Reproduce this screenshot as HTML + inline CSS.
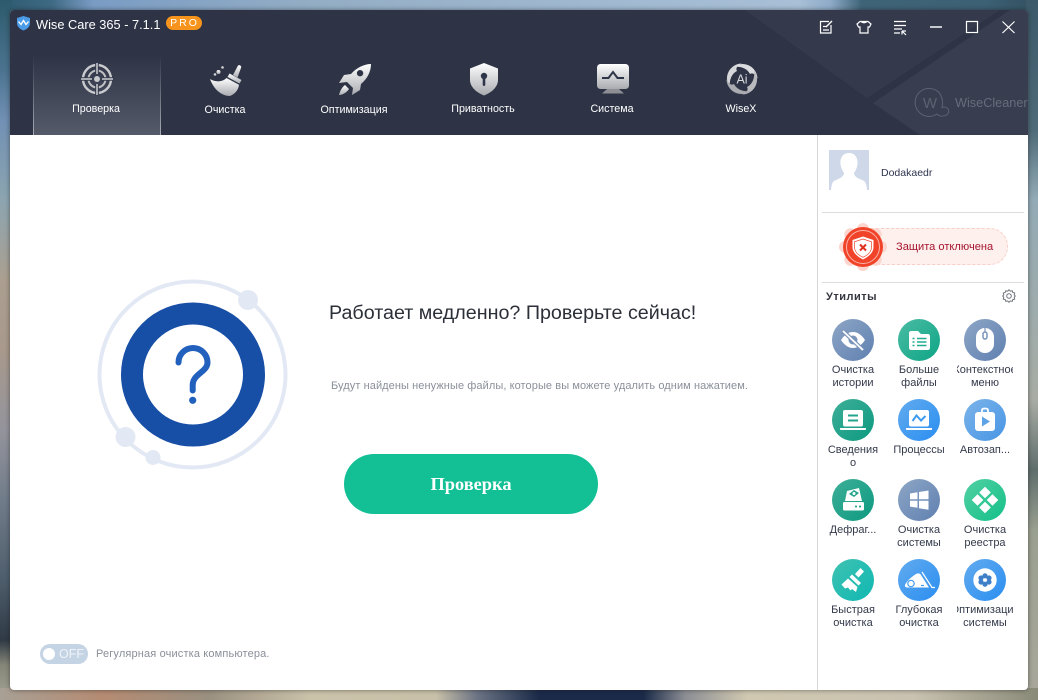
<!DOCTYPE html>
<html lang="ru"><head><meta charset="utf-8"><title>Wise Care 365</title>
<style>
html,body{margin:0;padding:0;width:1038px;height:700px;overflow:hidden;background:#8a99a5;font-family:"Liberation Sans","DejaVu Sans",sans-serif}
.a{position:absolute}
#top{left:0;top:0;width:1038px;height:14px;background:linear-gradient(90deg,#2e5a70 0,#3f6a84 5%,#7a9cc4 9%,#93adc4 30%,#9fb8d0 55%,#a8bfd6 77%,#8eabc8 80%,#3f6478 83%,#3c6074 95%,#33505f 100%)}
#left{left:0;top:0;width:12px;height:700px;background:linear-gradient(180deg,#2d5a6c 0,#4b7390 70px,#7190b4 120px,#8ca5b0 200px,#ab9f90 280px,#a8998c 350px,#94949c 430px,#707c8a 500px,#4e5d6c 580px,#2f3a45 640px,#868678 665px,#a3a396 700px)}
#right{left:1026px;top:0;width:12px;height:700px;background:linear-gradient(180deg,#3c5a6a 0,#4f6a78 130px,#93abb6 200px,#a8aca4 400px,#5f6e6c 470px,#9aa090 530px,#a9a79b 700px)}
#bot{left:0;top:688px;width:1038px;height:12px;background:linear-gradient(90deg,#a8a095 0,#b58b72 10%,#9a9080 20%,#cbc2aa 30%,#c8c0a8 42%,#6b7384 46%,#1a2a48 52%,#1a2a48 62%,#8c8e94 66%,#d0c8b0 72%,#c9c2b0 88%,#8a8a78 100%)}
#win{left:10px;top:10px;width:1018px;height:680px;background:#fff;border-radius:4px;overflow:hidden;box-shadow:0 0 5px rgba(30,30,30,.55)}
#hdr{left:10px;top:10px;width:1018px;height:125px;background:#2e3446;border-radius:4px 4px 0 0;overflow:hidden}
.nav{color:#fff;font-size:10.7px;line-height:14px;text-align:center;width:120px;white-space:nowrap}
.l{position:absolute;width:56px;height:13px;display:flex;justify-content:center;overflow:hidden;white-space:nowrap;color:#333a4a;font-size:11px;line-height:13px}
.ic{position:absolute;width:42px;height:42px;border-radius:50%}
.ic svg{display:block}
.slate{background:linear-gradient(135deg,#8ea6c6,#5f80b0)}
.green{background:linear-gradient(135deg,#4abca4,#0ea585)}
.teal{background:linear-gradient(135deg,#3eae98,#0d9a80)}
.blue{background:linear-gradient(135deg,#62abef,#2a8ef0)}
.lblue{background:linear-gradient(135deg,#7cb4ea,#4795e4)}
.bgreen{background:linear-gradient(135deg,#52d0a4,#14c088)}
.cyan{background:linear-gradient(135deg,#3fc2b2,#0fb8b2)}
</style></head><body>
<div class="a" id="top"></div><div class="a" id="left"></div><div class="a" id="right"></div><div class="a" id="bot"></div>
<div class="a" id="win"></div>

<svg class="a" width="0" height="0" style="left:0;top:0"><defs>
<linearGradient id="g" x1="0" y1="0" x2="0" y2="1"><stop offset="0" stop-color="#ffffff"/><stop offset="1" stop-color="#a9abb0"/></linearGradient>
</defs></svg>

<div class="a" id="hdr">
<svg class="a" style="left:0;top:0" width="1018" height="125" viewBox="10 10 1018 125">
<polygon points="745,10 1000,10 867,98" fill="#343a4c"/>
<polygon points="1010,10 1028,10 1028,135 920,135 873,103" fill="#383e50"/>
</svg>
<div class="a" style="left:23px;top:45px;width:128px;height:80px;background:linear-gradient(180deg,#2e3446 0,#555a69 100%)"></div>
<div class="a" style="left:23px;top:45px;width:1px;height:80px;background:linear-gradient(180deg,#2e3446,#a8abb3)"></div>
<div class="a" style="left:150px;top:45px;width:1px;height:80px;background:linear-gradient(180deg,#2e3446,#a8abb3)"></div>
</div>

<!-- title -->
<svg class="a" style="left:16px;top:15px" width="15" height="16" viewBox="0 0 15 16"><path d="M7.5 1 L14 3 V8 C14 12 10.5 14.500 7.5 15.500 C4.5 14.500 1 12 1 8 V3Z" fill="#4a9be8"/><path d="M2.5 6.500 L5 9.500 L7.5 5.500 L10 9.500 L12.5 6.500" stroke="#fff" stroke-width="1.300" fill="none"/></svg>
<div class="a" style="left:36px;top:17px;color:#fff;font-size:12.8px;line-height:16px;white-space:nowrap">Wise Care 365 - 7.1.1</div>
<div class="a" style="left:166px;top:16px;width:36px;height:14px;border-radius:7px;background:#f7941d;color:#fff;font-size:10.5px;line-height:14px;text-align:center;letter-spacing:2px;text-indent:1px">PRO</div>

<!-- window controls -->
<svg class="a" style="left:815px;top:15px" width="210" height="24" viewBox="815 15 210 24" fill="none" stroke="#fff" stroke-width="1.200">
<path d="M831 25V33H820.500V21.500H829"/><path d="M823 26.500H827M823 30H829"/><path d="M826 27L832 21" stroke-width="1.400"/>
<path d="M860 21.500H868L871 24L869.500 27H868V33H860V27H858.500L857 24Z"/><path d="M861 21.500Q864 24 867 21.500"/>
<path d="M894 21.500H906M894 25.500H906M894 29H902M894 33H900"/><path d="M902 31L906 31M902 31V34.500M902 31L906 35"/>
<path d="M930 27H942" stroke-width="1.800" stroke="#d8d9dd"/>
<rect x="966.500" y="21.500" width="11" height="11"/>
<path d="M1002.500 21.500L1014.500 33M1014.500 21.500L1002.500 33"/>
</svg>

<!-- nav icons -->
<svg class="a" style="left:80px;top:62px" width="34" height="34" viewBox="0 0 34 34" fill="none">
<circle cx="17" cy="17" r="14" stroke-width="2.400" stroke="#c9cacd"/>
<circle cx="17" cy="17" r="8.500" stroke-width="2" stroke="#bfc0c4"/>
<path d="M17 0.500V12M17 22V33.500M0.500 17H12M22 17H33.500" stroke="#33394b" stroke-width="3.600"/>
<path d="M17 1V12M17 22V33M1 17H12M22 17H33" stroke="#cfd0d3" stroke-width="1.500"/>
<circle cx="17" cy="17" r="3" fill="#c8c9cc"/>
</svg>
<svg class="a" style="left:209px;top:64px" width="34" height="32" viewBox="0 0 34 32" fill="url(#g)">
<path d="M29 1.500C30.500 0.500 33 2 32 4L28.500 13.500L24 11Z"/>
<path d="M20.500 9.500L32.500 16L30.500 19.500L18.500 13Z"/>
<path d="M17.500 14L30 20.800C29.500 26 26 30 21 32C13 32 5 26 1 15C6 18 13 18.500 17.500 14Z"/>
<circle cx="9.500" cy="8" r="2"/><circle cx="6" cy="10.500" r="1.300"/><circle cx="13.500" cy="3.500" r="1.300"/>
</svg>
<svg class="a" style="left:338px;top:63px" width="34" height="33" viewBox="0 0 34 33" fill="url(#g)">
<path fill-rule="evenodd" d="M33 1C26 1 18 5 13 11L6 12L1 20L9 19L15 25L14 32L22 27L23 21C29 16 33 9 33 1ZM22 7A3.200 3.200 0 1 0 22.100 13.400A3.200 3.200 0 1 0 22 7Z"/>
<path d="M7 22L11 26C9 29 5 32 1 32C2 28 4 24 7 22Z"/>
</svg>
<svg class="a" style="left:469px;top:62px" width="30" height="34" viewBox="0 0 30 34">
<path d="M15 1L29 6.500V18C29 25.500 21.500 31 15 33.500C8.500 31 1 25.500 1 18V6.500Z" fill="url(#g)"/>
<circle cx="15" cy="14" r="3.200" fill="#30364a"/><rect x="13.700" y="15" width="2.600" height="9" rx="1.200" fill="#30364a"/>
</svg>
<svg class="a" style="left:596px;top:63px" width="34" height="32" viewBox="0 0 34 32">
<rect x="1" y="1" width="32" height="25" rx="3.500" fill="url(#g)"/>
<path d="M6 15H12.500L17 9L21.500 15H28" stroke="#2f3548" stroke-width="2" fill="none"/>
<path d="M11 26H23L28 30.500H6Z" fill="#8d8f95"/>
</svg>
<svg class="a" style="left:726px;top:63px" width="32" height="32" viewBox="0 0 32 32">
<path d="M16 0.500C8 0.500 1 7 1 15.500C1 19 2 22 4 24.500C3 18 5 11 11 8C9 5 12 2 16 0.500Z" fill="#d6d7da"/>
<path d="M16 0.500C8 0.500 1 7 1 15.500C1 19 2 22 4 24.500C3 18 5 11 11 8C9 5 12 2 16 0.500Z" fill="#dcdde0" transform="rotate(90 16 16)"/>
<path d="M16 0.500C8 0.500 1 7 1 15.500C1 19 2 22 4 24.500C3 18 5 11 11 8C9 5 12 2 16 0.500Z" fill="#b9babe" transform="rotate(180 16 16)"/>
<path d="M16 0.500C8 0.500 1 7 1 15.500C1 19 2 22 4 24.500C3 18 5 11 11 8C9 5 12 2 16 0.500Z" fill="#a9abb0" transform="rotate(270 16 16)"/>
<text x="16" y="20.500" text-anchor="middle" font-family="Liberation Sans,sans-serif" font-size="12.500" fill="#d8d9dc">Ai</text>
</svg>

<div class="a nav" style="left:36px;top:102px">Проверка</div>
<div class="a nav" style="left:165px;top:103px">Очистка</div>
<div class="a nav" style="left:294px;top:103px">Оптимизация</div>
<div class="a nav" style="left:423px;top:102px">Приватность</div>
<div class="a nav" style="left:552px;top:102px">Система</div>
<div class="a nav" style="left:681px;top:102px">WiseX</div>

<!-- brand -->
<svg class="a" style="left:914px;top:87px" width="38" height="32" viewBox="0 0 38 32" fill="none" stroke="#5d6272" stroke-width="1">
<path d="M25.500 6A14 14 0 1 0 23 27C25 30 33 30 34.500 25.500C35.500 21 31 19 28 20.500C29 16 29 12 25.500 6"/>
<text x="16" y="21" text-anchor="middle" font-family="Liberation Sans,sans-serif" font-size="15" fill="#5d6272" stroke="none">W</text>
</svg>
<div class="a" style="left:955px;top:93px;width:73px;height:20px;overflow:hidden;color:#676c7b;font-size:12.700px;line-height:20px;white-space:nowrap">WiseCleaner</div>

<!-- main graphic -->
<svg class="a" style="left:90px;top:272px" width="206" height="206" viewBox="90 272 206 206">
<circle cx="192.500" cy="374.500" r="93" fill="none" stroke="#e3e9f4" stroke-width="4"/>
<circle cx="248" cy="300" r="10" fill="#e3e9f4"/>
<circle cx="125.500" cy="437" r="10" fill="#e3e9f4"/>
<circle cx="153" cy="457.500" r="7.500" fill="#e3e9f4"/>
<circle cx="193" cy="374.500" r="61" fill="#fff" stroke="#174ea6" stroke-width="22"/>
<path d="M178.500 362.500A14.500 14.500 0 0 1 207.500 362.500C207.500 372 192.700 374 192.700 385V390.500" fill="none" stroke="#2160bd" stroke-width="6" stroke-linecap="round"/>
<circle cx="192.700" cy="400.300" r="3.600" fill="#2160bd"/>
</svg>

<div class="a" style="left:329px;top:300px;font-size:19.7px;line-height:26px;color:#2b2f38;white-space:nowrap">Работает медленно? Проверьте сейчас!</div>
<div class="a" style="left:331px;top:379px;font-size:11px;line-height:14px;color:#8a8f99;white-space:nowrap;letter-spacing:.08px">Будут найдены ненужные файлы, которые вы можете удалить одним нажатием.</div>
<div class="a" style="left:344px;top:454px;width:254px;height:60px;border-radius:30px;background:#13c095;color:#fff;font-family:'Liberation Serif',serif;font-weight:bold;font-size:18.4px;line-height:60px;text-align:center">Проверка</div>

<!-- toggle -->
<div class="a" style="left:40px;top:644px;width:48px;height:20px;border-radius:10px;background:#c5d4e4"></div>
<div class="a" style="left:43px;top:648px;width:12px;height:12px;border-radius:50%;background:#fff"></div>
<div class="a" style="left:59px;top:646px;color:#eef2f7;font-size:12.5px;line-height:16px">OFF</div>
<div class="a" style="left:96px;top:647px;color:#8a8f99;font-size:11px;line-height:14px;white-space:nowrap;letter-spacing:.15px">Регулярная очистка компьютера.</div>

<!-- sidebar -->
<div class="a" style="left:817px;top:135px;width:1px;height:555px;background:#d6d6d6"></div>
<svg class="a" style="left:829px;top:150px" width="40" height="40" viewBox="0 0 40 40">
<rect width="40" height="40" fill="#ced8e8"/>
<path d="M20 3C13 3 11 9 11.500 14C12 18 13.500 21 15 23C15 26 12 28 7 30C4 31 2.500 33 2 40H38C37.500 33 36 31 33 30C28 28 25 26 25 23C26.500 21 28 18 28.500 14C29 9 27 3 20 3Z" fill="#fff"/>
</svg>
<div class="a" style="left:881px;top:166px;font-size:10.5px;line-height:14px;color:#2f3550">Dodakaedr</div>
<div class="a" style="left:822px;top:212px;width:202px;height:1px;background:#dcdcdc"></div>
<div class="a" style="left:848px;top:228px;width:158px;height:35px;border-radius:18px;background:#fdf0ed;border:1px dashed #f8cfc8"></div>
<svg class="a" style="left:838px;top:222px" width="50" height="50" viewBox="0 0 50 50">
<g fill="#fcd6ce"><circle cx="25" cy="7" r="6"/><circle cx="25" cy="43" r="6"/><circle cx="7" cy="25" r="6"/><circle cx="43" cy="25" r="6"/><circle cx="12.300" cy="12.300" r="6"/><circle cx="37.700" cy="12.300" r="6"/><circle cx="12.300" cy="37.700" r="6"/><circle cx="37.700" cy="37.700" r="6"/></g>
<circle cx="25" cy="25" r="20" fill="#f0432a"/>
<circle cx="25" cy="25" r="16.500" fill="none" stroke="#f9b5a8" stroke-width="1"/>
<path d="M25 14.500L35.500 18V25C35.500 31 30 35 25 37.500C20 35 14.500 31 14.500 25V18Z" fill="#fff"/>
<path d="M25 17L33.500 19.800V25C33.500 30 29 33.500 25 35.300C21 33.500 16.500 30 16.500 25V19.800Z" fill="none" stroke="#f0432a" stroke-width=".7"/>
<path d="M22 22.500L28 28.500M28 22.500L22 28.500" stroke="#e0301e" stroke-width="2"/>
</svg>
<div class="a" style="left:896px;top:240px;color:#a5152f;font-size:11.100px;line-height:14px;white-space:nowrap">Защита отключена</div>
<div class="a" style="left:822px;top:282px;width:202px;height:1px;background:#dcdcdc"></div>
<div class="a" style="left:826px;top:290px;color:#34373f;font-size:11px;font-weight:bold;line-height:14px;letter-spacing:.5px">Утилиты</div>
<svg class="a" style="left:1002px;top:289px" width="14" height="14" viewBox="0 0 14 14" fill="none" stroke="#74777e" stroke-width="1">
<path d="M7 .7L8.300 2.200L10.200 1.700L10.800 3.500L12.700 4L12.200 5.800L13.300 7L12.200 8.300L12.700 10.100L10.800 10.600L10.200 12.400L8.300 11.900L7 13.300L5.700 11.900L3.800 12.400L3.200 10.600L1.300 10.100L1.800 8.300L.7 7L1.800 5.800L1.300 4L3.200 3.500L3.800 1.700L5.700 2.200Z"/>
<circle cx="7" cy="7" r="2.300"/>
</svg>

<!-- tools: row 1 -->
<div class="ic slate" style="left:832px;top:319px"><svg width="42" height="42" viewBox="0 0 42 42"><path d="M9 21C13 15 17 13 21 13C25 13 29 15 33 21C29 27 25 29 21 29C17 29 13 27 9 21Z" fill="#fff"/><circle cx="21" cy="21" r="4.500" fill="#7a94ba"/><path d="M11 12L31 31" stroke="#7a94ba" stroke-width="4"/><path d="M11 12L31 31" stroke="#fff" stroke-width="1.800"/></svg></div>
<div class="ic green" style="left:898px;top:319px"><svg width="42" height="42" viewBox="0 0 42 42"><path d="M11 14C11 12.800 12 12 13 12H20L23 15H30C31 15 32 16 32 17V29C32 30 31 31 30 31H13C12 31 11 30 11 29Z" fill="#fff"/><path d="M14.500 19.500H16.500M19 19.500H28.500M14.500 23H16.500M19 23H28.500M14.500 26.500H16.500M19 26.500H28.500" stroke="#22ad90" stroke-width="1.600"/></svg></div>
<div class="ic slate" style="left:964px;top:319px"><svg width="42" height="42" viewBox="0 0 42 42"><rect x="12" y="9" width="18" height="25" rx="9" fill="#fff"/><rect x="19" y="13" width="4" height="7" rx="2" fill="#fff" stroke="#7a94ba" stroke-width="1.500"/><path d="M21 9V13" stroke="#7a94ba" stroke-width="1.200"/></svg></div>
<div class="l" style="left:825px;top:364px">Очистка</div><div class="l" style="left:825px;top:377px">истории</div>
<div class="l" style="left:891px;top:364px">Больше</div><div class="l" style="left:891px;top:377px">файлы</div>
<div class="l" style="left:957px;top:364px">Контекстное</div><div class="l" style="left:957px;top:377px">меню</div>

<!-- row 2 -->
<div class="ic teal" style="left:832px;top:399px"><svg width="42" height="42" viewBox="0 0 42 42"><rect x="11" y="11" width="20" height="16.500" rx="2" fill="#fff"/><path d="M16 16.500H26M16 21.500H26" stroke="#22a58c" stroke-width="2"/><path d="M8 29H34V30C34 30.700 33.500 31 33 31H9C8.500 31 8 30.700 8 30Z" fill="#fff"/></svg></div>
<div class="ic blue" style="left:898px;top:399px"><svg width="42" height="42" viewBox="0 0 42 42"><rect x="11" y="11" width="20" height="16.500" rx="2" fill="#fff"/><path d="M14.500 22L18.500 16.500L23 21.500L27.500 17" fill="none" stroke="#409bef" stroke-width="2"/><path d="M8 29H34V30C34 30.700 33.500 31 33 31H9C8.500 31 8 30.700 8 30Z" fill="#fff"/></svg></div>
<div class="ic lblue" style="left:964px;top:399px"><svg width="42" height="42" viewBox="0 0 42 42"><rect x="11" y="13" width="20" height="19" rx="3" fill="#fff"/><path d="M18 13V11C18 10 19 9.500 21 9.500C23 9.500 24 10 24 11V13" fill="none" stroke="#fff" stroke-width="1.800"/><path d="M18 17.500L26 22.500L18 27.500Z" fill="#5fa3e7"/></svg></div>
<div class="l" style="left:825px;top:444px">Сведения</div><div class="l" style="left:825px;top:457px">о</div>
<div class="l" style="left:891px;top:444px">Процессы</div>
<div class="l" style="left:957px;top:444px">Автозап...</div>

<!-- row 3 -->
<div class="ic teal" style="left:832px;top:479px"><svg width="42" height="42" viewBox="0 0 42 42"><path d="M13 22L15 12L27 9L30 22Z" fill="#fff"/><path d="M17 15L22 11L27 14L22 18Z" fill="#22a58c"/><circle cx="22" cy="14.500" r="1.500" fill="#fff"/><rect x="11" y="23" width="21" height="8.500" rx="1.500" fill="#fff"/><path d="M23 27.500H25M27 27.500H29" stroke="#22a58c" stroke-width="1.800"/></svg></div>
<div class="ic slate" style="left:898px;top:479px"><svg width="42" height="42" viewBox="0 0 42 42"><path d="M12 14.500L19.500 13.300V20.300H12ZM21 13L30.500 11.500V20.300H21ZM12 21.800H19.500V28.800L12 27.600ZM21 21.800H30.500V30.700L21 29.200Z" fill="#fff"/></svg></div>
<div class="ic bgreen" style="left:964px;top:479px"><svg width="42" height="42" viewBox="0 0 42 42"><path d="M21 7.700L26.800 13.500L21 19.300L15.200 13.500ZM13.500 15.200L19.300 21L13.500 26.800L7.700 21ZM28.500 15.200L34.300 21L28.500 26.800L22.700 21ZM21 22.700L26.800 28.500L21 34.300L15.200 28.500Z" fill="#fff"/></svg></div>
<div class="l" style="left:825px;top:524px">Дефраг...</div>
<div class="l" style="left:891px;top:524px">Очистка</div><div class="l" style="left:891px;top:537px">системы</div>
<div class="l" style="left:957px;top:524px">Очистка</div><div class="l" style="left:957px;top:537px">реестра</div>

<!-- row 4 -->
<div class="ic cyan" style="left:832px;top:559px"><svg width="42" height="42" viewBox="0 0 42 42"><path d="M28.500 9L32 12.500L26.500 18.500L23 15Z" fill="#fff"/><path d="M20 15.500L29 24L26.500 26.500L17.500 18Z" fill="#fff"/><path d="M16 19.500L25.500 28L24 33L20 30L18.500 31.500L16 28.500L13 29.500L9.500 25.500Z" fill="#fff"/></svg></div>
<div class="ic blue" style="left:898px;top:559px"><svg width="42" height="42" viewBox="0 0 42 42"><path d="M7 26C8 23 13 18 18 15C20 14 22 14 23 16L31 28.500H10C8 28.500 6.500 28 7 26Z" fill="#fff"/><circle cx="13" cy="24.500" r="3.200" fill="#fff" stroke="#3f9bef" stroke-width="1.200"/><path d="M23 26.500H26" stroke="#3f9bef" stroke-width="1.200"/><path d="M24 13L34 28.500H37" fill="none" stroke="#fff" stroke-width="1.200"/></svg></div>
<div class="ic blue" style="left:964px;top:559px"><svg width="42" height="42" viewBox="0 0 42 42"><circle cx="21" cy="21" r="11.700" fill="#fff"/><g fill="#3f7fc8"><circle cx="21" cy="16.800" r="2.600"/><circle cx="21" cy="25.200" r="2.600"/><circle cx="17" cy="19" r="2.600"/><circle cx="25" cy="19" r="2.600"/><circle cx="17" cy="23" r="2.600"/><circle cx="25" cy="23" r="2.600"/></g><circle cx="21" cy="21" r="1.500" fill="#fff"/></svg></div>
<div class="l" style="left:825px;top:604px">Быстрая</div><div class="l" style="left:825px;top:617px">очистка</div>
<div class="l" style="left:891px;top:604px">Глубокая</div><div class="l" style="left:891px;top:617px">очистка</div>
<div class="l" style="left:957px;top:604px">Оптимизация</div><div class="l" style="left:957px;top:617px">системы</div>
</body></html>
